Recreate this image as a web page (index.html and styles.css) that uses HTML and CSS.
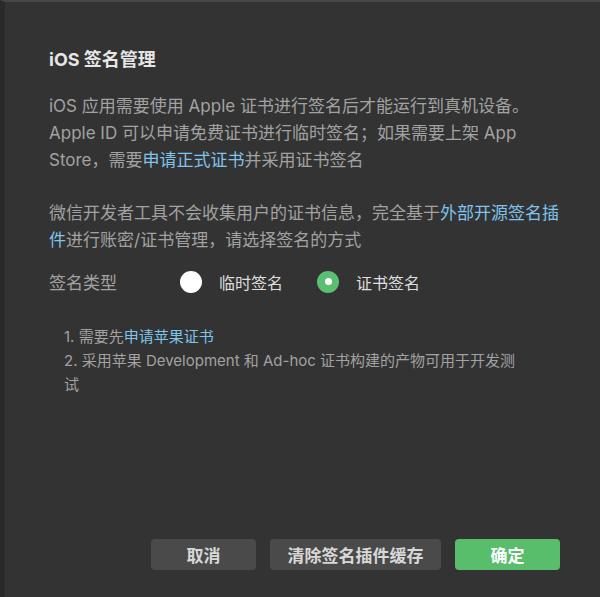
FILE: index.html
```html
<!DOCTYPE html>
<html lang="zh-CN">
<head>
<meta charset="utf-8">
<title>iOS 签名管理</title>
<link rel="stylesheet" href="styles.css">
</head>
<body>
<div class="dialog">
  <h1 class="title">iOS 签名管理</h1>
  <p class="desc">iOS 应用需要使用 Apple 证书进行签名后才能运行到真机设备。<br>Apple ID 可以申请免费证书进行临时签名；如果需要上架 App<br>Store，需要<a class="link" href="#">申请正式证书</a>并采用证书签名</p>
  <p class="desc desc-gap">微信开发者工具不会收集用户的证书信息，完全基于<a class="link" href="#">外部开源签名插件</a>进行账密/证书管理，请选择签名的方式</p>
  <div class="radio-row">
    <span class="type-label">签名类型</span>
    <label class="option">
      <span class="radio"></span>
      <span class="option-text">临时签名</span>
    </label>
    <label class="option option-second">
      <span class="radio radio-checked"></span>
      <span class="option-text">证书签名</span>
    </label>
  </div>
  <div class="notes">
    <div>1. 需要先<a class="link" href="#">申请苹果证书</a></div>
    <div>2. 采用苹果 Development 和 Ad-hoc 证书构建的产物可用于开发测<br>试</div>
  </div>
  <div class="footer">
    <button class="btn btn-gray btn-cancel">取消</button>
    <button class="btn btn-gray btn-clear">清除签名插件缓存</button>
    <button class="btn btn-green btn-ok">确定</button>
  </div>
</div>
</body>
</html>
```

FILE: styles.css
```css
html, body {
  margin: 0;
  padding: 0;
  background: #333333;
}

body {
  font-family: Inter, "Noto Sans CJK SC", sans-serif;
}

.dialog {
  box-sizing: border-box;
  height: 597px;
  border-left: 5px solid #2a2a2a;
  border-top: 2px solid #474747;
  padding: 44px 40px 27px 44px;
  display: flex;
  flex-direction: column;
}

.title {
  margin: 0;
  font-size: 18px;
  line-height: 27px;
  font-weight: 700;
  color: #e6e6e6;
}

.desc {
  margin: 20px 0 0;
  font-size: 17px;
  line-height: 27px;
  color: #a2a2a2;
}

.desc-gap {
  margin-top: 26px;
}

.link {
  color: #7fc4ec;
  text-decoration: none;
}

.radio-row {
  margin-top: 14px;
  height: 27px;
  display: flex;
  align-items: center;
  font-size: 16px;
  color: #a2a2a2;
}

.type-label {
  width: 131px;
  font-size: 17px;
}

.option {
  display: flex;
  align-items: center;
  gap: 17px;
}

.option-second {
  margin-left: 34px;
}

.option-text {
  color: #dedede;
  font-size: 16px;
}

.radio {
  box-sizing: border-box;
  width: 22px;
  height: 22px;
  border-radius: 50%;
  background: #ffffff;
}

.radio-checked {
  background: #5abf70;
  display: flex;
  align-items: center;
  justify-content: center;
}

.radio-checked::after {
  content: "";
  width: 7px;
  height: 7px;
  border-radius: 50%;
  background: #ffffff;
}

.notes {
  margin-top: 30px;
  padding: 0 15px;
  font-size: 15px;
  line-height: 24px;
  color: #a2a2a2;
}

.footer {
  margin-top: auto;
  display: flex;
  justify-content: flex-end;
  gap: 14px;
}

.btn {
  height: 31px;
  border: none;
  border-radius: 4px;
  font-family: Inter, "Noto Sans CJK SC", sans-serif;
  font-size: 17px;
  font-weight: 700;
  padding: 0;
  cursor: pointer;
}

.btn-gray {
  background: #4a4a4a;
  color: #d8d8d8;
}

.btn-green {
  background: #58be6b;
  color: #ffffff;
}

.btn-cancel,
.btn-ok {
  width: 105px;
}

.btn-clear {
  width: 171px;
}
```
